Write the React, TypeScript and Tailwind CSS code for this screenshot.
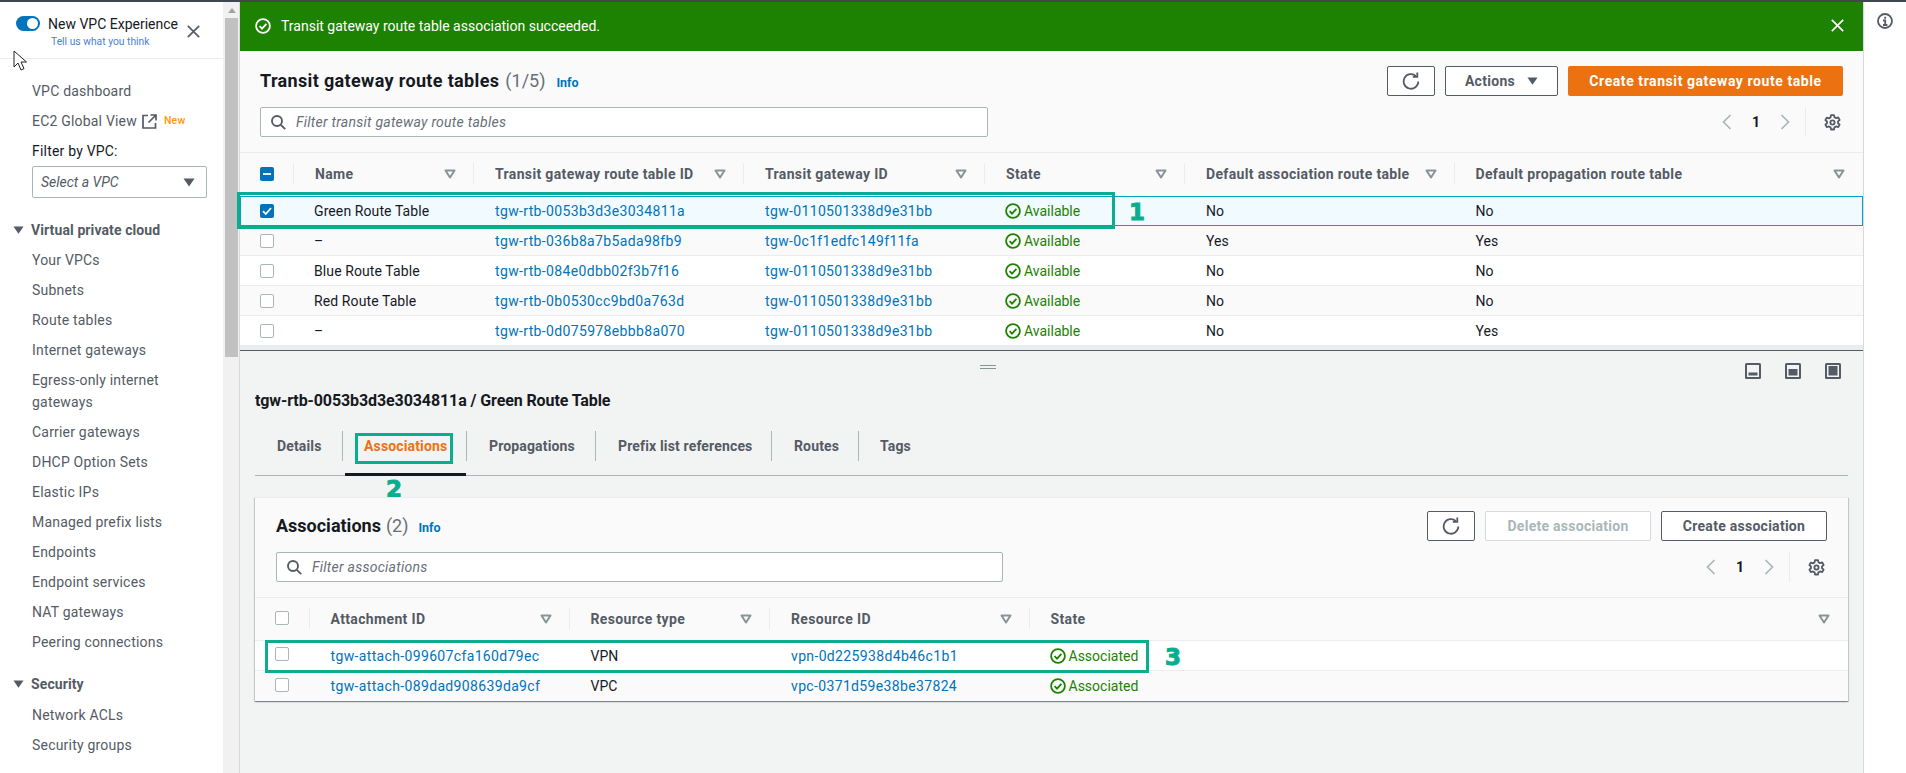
import React from "react";

const Caret = () => (
  <svg width="12" height="10" viewBox="0 0 12 10" className="shrink-0">
    <path d="M1.5 1.5h9L6 8.5z" fill="none" stroke="#879596" strokeWidth="2" strokeLinejoin="round" />
  </svg>
);
const SolidCaret = ({ color = "#545b64", w = 12 }: { color?: string; w?: number }) => (
  <svg width={w} height={w * 0.75} viewBox="0 0 12 9" className="shrink-0">
    <path d="M0.5 0.5h11L6 8.5z" fill={color} />
  </svg>
);
const Refresh = () => (
  <svg width="18" height="18" viewBox="0 0 16 16" fill="none" stroke="#545b64" strokeWidth="1.6">
    <path d="M12.4 3.6A6.5 6.5 0 1 0 14.5 8.5" />
    <path d="M13.6 0.4v4H9.6" />
  </svg>
);
const Search = () => (
  <svg width="15" height="15" viewBox="0 0 15 15" fill="none" stroke="#545b64" strokeWidth="1.9" className="shrink-0">
    <circle cx="6" cy="6" r="5" />
    <path d="M9.8 9.8L14.2 14.2" />
  </svg>
);
const Gear = () => (
  <svg width="17" height="17" viewBox="0 0 16 16" fill="none" stroke="#545b64" strokeWidth="1.7">
    <path d="M6.6 1h2.8l.4 2 1.6.9 2-.7 1.3 2.4-1.5 1.3v1.8l1.5 1.3-1.3 2.4-2-.7-1.6.9-.4 2H6.6l-.4-2-1.6-.9-2 .7-1.3-2.4 1.5-1.3V7.1L1.3 5.8l1.3-2.4 2 .7 1.6-.9z" strokeLinejoin="round" />
    <circle cx="8" cy="8" r="2" />
  </svg>
);
const Chevron = ({ dir }: { dir: "l" | "r" }) => (
  <svg width="10" height="16" viewBox="0 0 10 16" fill="none" stroke="#aab7b8" strokeWidth="1.7">
    <path d={dir === "l" ? "M8.5 1L1.5 8l7 7" : "M1.5 1l7 7-7 7"} />
  </svg>
);
const OkCircle = ({ color = "#1d8102", size = 16 }: { color?: string; size?: number }) => (
  <svg width={size} height={size} viewBox="0 0 16 16" fill="none" stroke={color} strokeWidth="1.8" className="shrink-0">
    <circle cx="8" cy="8" r="6.9" />
    <path d="M4.6 8.2l2.4 2.4 4.4-4.8" />
  </svg>
);
const Close = ({ color, size = 13 }: { color: string; size?: number }) => (
  <svg width={size} height={size} viewBox="0 0 13 13" fill="none" stroke={color} strokeWidth="1.7">
    <path d="M0.8 0.8l11.4 11.4M12.2 0.8L0.8 12.2" />
  </svg>
);
const Box = ({ checked, dash }: { checked?: boolean; dash?: boolean }) =>
  checked || dash ? (
    <span className="flex h-[14px] w-[14px] items-center justify-center rounded-[2px] bg-[#0073bb]">
      <svg width="10" height="10" viewBox="0 0 10 10" fill="none" stroke="#fff" strokeWidth="1.8">
        {dash ? <path d="M1 5h8" /> : <path d="M1 5.2l2.8 2.8L9 2" />}
      </svg>
    </span>
  ) : (
    <span className="block h-[14px] w-[14px] rounded-[2px] border border-[#aab7b8] bg-white" />
  );

const Sep = () => <span className="absolute right-0 top-[10px] h-[21px] w-px bg-[#eaeded]" />;

const Th = ({ label, last }: { label: string; last?: boolean }) => (
  <div className="relative flex h-full items-center justify-between pb-[1px] pl-[21px] pr-[18px] font-bold tracking-[0.35px] text-[#545b64]">
    <span>{label}</span>
    <Caret />
    {!last && <Sep />}
  </div>
);

const Status = ({ label }: { label: string }) => (
  <div className="flex items-center gap-[3px] pl-[20px] text-[#1d8102]">
    <OkCircle />
    <span>{label}</span>
  </div>
);

const Link = ({ children }: { children: string }) => (
  <div className="pl-[21px] tracking-[0.35px] text-[#0073bb]">{children}</div>
);

const topRows = [
  ["Green Route Table", "tgw-rtb-0053b3d3e3034811a", "tgw-0110501338d9e31bb", "No", "No"],
  ["–", "tgw-rtb-036b8a7b5ada98fb9", "tgw-0c1f1edfc149f11fa", "Yes", "Yes"],
  ["Blue Route Table", "tgw-rtb-084e0dbb02f3b7f16", "tgw-0110501338d9e31bb", "No", "No"],
  ["Red Route Table", "tgw-rtb-0b0530cc9bd0a763d", "tgw-0110501338d9e31bb", "No", "No"],
  ["–", "tgw-rtb-0d075978ebbb8a070", "tgw-0110501338d9e31bb", "No", "Yes"],
];

const navA = [
  "Your VPCs",
  "Subnets",
  "Route tables",
  "Internet gateways",
  "Egress-only internet gateways",
  "Carrier gateways",
  "DHCP Option Sets",
  "Elastic IPs",
  "Managed prefix lists",
  "Endpoints",
  "Endpoint services",
  "NAT gateways",
  "Peering connections",
];

const NavItem = ({ children }: { children: React.ReactNode }) => (
  <div className="py-[4px] pl-[32px] pr-[20px] text-[14px] leading-[22px] tracking-[0.2px] text-[#545b64]">{children}</div>
);

const NavHead = ({ children }: { children: string }) => (
  <div className="flex items-center gap-[7px] pl-[13px] text-[14px] font-bold leading-[22px] tracking-[0.1px] text-[#545b64]">
    <SolidCaret w={11} />
    <span>{children}</span>
  </div>
);

const Num = ({ children, className }: { children: string; className: string }) => (
  <span
    className={`absolute font-['DejaVu_Sans',sans-serif] text-[23px] font-bold leading-none text-[#0aae8f] [-webkit-text-stroke:1px_#0aae8f] ${className}`}
  >
    {children}
  </span>
);

const Outline = ({ className }: { className: string }) => (
  <span className={`pointer-events-none absolute border-[3px] border-[#0aae8f] ${className}`} />
);

const PanelIcon = ({ fill }: { fill: "low" | "mid" | "full" }) => (
  <svg width="16" height="16" viewBox="0 0 16 16">
    <rect x="0" y="0" width="16" height="16" rx="1.5" fill="#545b64" />
    <rect x="2" y="2" width="12" height="12" fill="#f2f3f3" />
    {fill === "low" && <rect x="3.5" y="9.5" width="9" height="3" fill="#545b64" />}
    {fill === "mid" && <rect x="3.5" y="6" width="9" height="6.5" fill="#545b64" />}
    {fill === "full" && <rect x="3.5" y="3" width="9" height="9.5" fill="#545b64" />}
  </svg>
);

const Pager = () => (
  <div className="flex items-center">
    <Chevron dir="l" />
    <span className="w-[48px] text-center text-[14px] font-bold text-[#16191f]">1</span>
    <Chevron dir="r" />
    <span className="ml-[15px] mr-[18px] h-[30px] w-px bg-[#eaeded]" />
    <Gear />
  </div>
);

const topCols = "grid grid-cols-[54px_180px_270px_241px_200px_269.5px_1fr]";
const lowCols = "grid grid-cols-[54.5px_260px_200.5px_259.5px_1fr]";

export default function App() {
  return (
    <div className="flex h-[773px] w-[1906px] flex-col overflow-hidden border-t-2 border-[#414750] bg-white font-['Roboto',sans-serif] text-[14px] leading-[20px] text-[#16191f]">
      <div className="flex min-h-0 flex-1">
        {/* Sidebar */}
        <aside className="flex w-[240px] shrink-0 border-r border-[#d5dbdb]">
          <div className="relative w-[223px] shrink-0">
            <div className="flex h-[57px] border-b border-[#eaeded] pl-[16px] pt-[14px]">
              <span className="flex h-[15px] w-[24px] items-center justify-end rounded-full bg-[#0073bb] pr-[2px]">
                <span className="h-[11px] w-[11px] rounded-full bg-white" />
              </span>
              <div className="ml-[8px] w-[133px]">
                <div className="leading-[16px] text-[#16191f]">New VPC Experience</div>
                <div className="ml-[3px] mt-[2px] text-[10.3px] leading-[15px] text-[#4a7fd6]">Tell us what you think</div>
              </div>
              <span className="ml-[6px] mt-[9px]">
                <Close color="#545b64" />
              </span>
            </div>
            <svg width="14" height="21" viewBox="0 0 14 21" className="absolute left-[13px] top-[48px]">
              <path d="M1 1v16l4-4 3 7 3-1.4-3-6.6h5.5z" fill="#fff" stroke="#222" strokeWidth="1" strokeLinejoin="round" />
            </svg>
            <div className="pt-[17px]">
              <NavItem>VPC dashboard</NavItem>
              <NavItem>
                <span className="flex items-center">
                  EC2 Global View
                  <svg width="15" height="15" viewBox="0 0 15 15" fill="none" stroke="#545b64" strokeWidth="1.7" className="ml-[5px]">
                    <path d="M6 1.5H1v12.5h12.5V9M8.5 1h5.5v5.5M14 1L6.5 8.5" />
                  </svg>
                  <span className="ml-[7px] text-[10.5px] font-medium text-[#ff9900]">New</span>
                </span>
              </NavItem>
              <div className="py-[4px] pl-[32px] leading-[22px] tracking-[0.2px] text-[#16191f]">Filter by VPC:</div>
              <div className="ml-[32px] flex h-[32px] w-[175px] items-center justify-between rounded-[2px] border border-[#aab7b8] pl-[8px] pr-[11px] italic text-[#545b64]">
                <span>Select a VPC</span>
                <SolidCaret w={12} />
              </div>
              <div className="mt-[21px]">
                <NavHead>Virtual private cloud</NavHead>
              </div>
              <div className="mt-[4px]">
                {navA.map((n) => (
                  <NavItem key={n}>{n}</NavItem>
                ))}
              </div>
              <div className="mt-[16px]">
                <NavHead>Security</NavHead>
              </div>
              <div className="mt-[5px]">
                <NavItem>Network ACLs</NavItem>
                <NavItem>Security groups</NavItem>
              </div>
            </div>
          </div>
          <div className="flex w-[16px] flex-col items-end bg-[#f1f1f1] pr-[1px]">
            <div className="flex h-[16px] w-full items-center justify-center pl-[2px]">
              <svg width="8" height="5" viewBox="0 0 8 5">
                <path d="M0 5l4-5 4 5z" fill="#a3a3a3" />
              </svg>
            </div>
            <div className="h-[339px] w-[13px] bg-[#c1c1c1]" />
          </div>
        </aside>

        {/* Main */}
        <main className="flex w-[1623px] shrink-0 flex-col">
          <div className="flex h-[49px] shrink-0 items-center bg-[#1d8102] pb-[2px] pl-[15px] pr-[19px] text-white">
            <OkCircle color="#fff" size={16} />
            <span className="ml-[10px] flex-1">Transit gateway route table association succeeded.</span>
            <Close color="#fff" />
          </div>

          <section className="relative h-[295px] shrink-0 bg-[#fafafa]">
            <div className="h-[102px] border-b border-[#eaeded] px-[20px] pt-[15px]">
              <div className="flex h-[30px] items-center">
                <h1 className="text-[18px] font-bold tracking-[0.35px] text-[#16191f]">Transit gateway route tables</h1>
                <span className="ml-[6px] text-[18px] text-[#687078]">(1/5)</span>
                <span className="ml-[11px] mt-[4px] text-[12.5px] font-bold text-[#0073bb]">Info</span>
                <div className="ml-auto flex items-center gap-[10px]">
                  <button className="flex h-[30px] w-[48px] items-center justify-center rounded-[2px] border border-[#545b64] bg-white">
                    <Refresh />
                  </button>
                  <button className="flex h-[30px] w-[113px] items-center justify-center gap-[12px] rounded-[2px] border border-[#545b64] bg-white font-bold tracking-[0.3px] text-[#545b64]">
                    Actions
                    <SolidCaret w={11} />
                  </button>
                  <button className="h-[30px] w-[275px] rounded-[2px] bg-[#ec7211] font-bold tracking-[0.57px] text-white">
                    Create transit gateway route table
                  </button>
                </div>
              </div>
              <div className="mt-[11px] flex h-[30px] items-center">
                <div className="flex h-[30px] w-[728px] items-center rounded-[2px] border border-[#aab7b8] bg-white pl-[10px]">
                  <Search />
                  <span className="ml-[10px] italic tracking-[0.25px] text-[#687078]">Filter transit gateway route tables</span>
                </div>
                <div className="ml-auto pr-[2px]">
                  <Pager />
                </div>
              </div>
            </div>
            <div className={`${topCols} h-[43px] items-center`}>
              <div className="relative flex h-full items-center pb-[1px] pl-[20px]">
                <Box dash />
                <Sep />
              </div>
              <Th label="Name" />
              <Th label="Transit gateway route table ID" />
              <Th label="Transit gateway ID" />
              <Th label="State" />
              <Th label="Default association route table" />
              <Th label="Default propagation route table" last />
            </div>
            {topRows.map((r, i) => (
              <div
                key={r[1]}
                className={`${topCols} h-[30px] items-center ${
                  i === 0
                    ? "bg-[#f1faff] shadow-[inset_0_0_0_1px_#00a1c9]"
                    : i % 2 === 1
                      ? "border-b border-[#eaeded]"
                      : "border-b border-[#eaeded] bg-white"
                }`}
              >
                <div className="pl-[20px]">
                  <Box checked={i === 0} />
                </div>
                <div className="pl-[20px] tracking-[0.1px]">{r[0]}</div>
                <Link>{r[1]}</Link>
                <Link>{r[2]}</Link>
                <Status label="Available" />
                <div className="pl-[21px]">{r[3]}</div>
                <div className="pl-[21px]">{r[4]}</div>
              </div>
            ))}
            <Outline className="left-[-3px] top-[141px] h-[37px] w-[878px]" />
            <Num className="left-[889px] top-[150px]">1</Num>
          </section>

          <div className="h-[4px] shrink-0 bg-[#eaeded]" />

          <section className="relative flex-1 border-t border-[#545b64] bg-[#f2f3f3] px-[15px]">
            <div className="flex h-[40px] items-start">
              <div className="ml-[725px] mt-[14px] flex w-[16px] flex-col gap-[2px]">
                <span className="h-px bg-[#879596]" />
                <span className="h-px bg-[#879596]" />
              </div>
              <div className="ml-auto mr-[7px] mt-[12px] flex gap-[24px]">
                <PanelIcon fill="low" />
                <PanelIcon fill="mid" />
                <PanelIcon fill="full" />
              </div>
            </div>
            <div className="h-[20px] text-[16px] font-bold tracking-[-0.1px]">tgw-rtb-0053b3d3e3034811a / Green Route Table</div>

            <div className="relative mt-[20px] flex h-[45px] items-start border-b border-[#aab7b8] font-bold tracking-[0.15px] text-[#545b64]">
              {[
                ["Details", "w-[88px] pl-[22px]"],
                ["Associations", "w-[124px] pl-[21px] text-[#ec7211]"],
                ["Propagations", "w-[129px] pl-[22px]"],
                ["Prefix list references", "w-[176px] pl-[22px]"],
                ["Routes", "w-[87px] pl-[22px]"],
                ["Tags", "w-[70px] pl-[21px]"],
              ].map(([t, c], i) => (
                <div key={t} className={`flex h-[30px] items-center ${i < 5 ? "border-r border-[#aab7b8]" : ""} ${c}`}>
                  {t}
                </div>
              ))}
              <span className="absolute bottom-[-1px] left-[90px] h-[3px] w-[121px] bg-[#16191f]" />
              <Outline className="left-[100px] top-[2px] h-[31px] w-[98px]" />
              <Num className="left-[131px] top-[47px]">2</Num>
            </div>

            <div className="relative mt-[21px] h-[204px] border-t border-[#eaeded] bg-[#fafafa] shadow-[0_1px_1px_0_rgba(0,28,36,0.3),1px_1px_1px_0_rgba(0,28,36,0.15),-1px_1px_1px_0_rgba(0,28,36,0.15)]">
              <div className="h-[100px] border-b border-[#eaeded] px-[21px] pt-[13px]">
                <div className="flex h-[30px] items-center">
                  <h2 className="text-[18px] font-bold">Associations</h2>
                  <span className="ml-[5px] text-[18px] text-[#687078]">(2)</span>
                  <span className="ml-[10px] mt-[4px] text-[12.5px] font-bold text-[#0073bb]">Info</span>
                  <div className="ml-auto flex items-center gap-[10px]">
                    <button className="flex h-[30px] w-[48px] items-center justify-center rounded-[2px] border border-[#545b64] bg-white">
                      <Refresh />
                    </button>
                    <button className="h-[30px] w-[166px] rounded-[2px] border border-[#d5dbdb] bg-white font-bold tracking-[0.27px] text-[#aab7b8]">
                      Delete association
                    </button>
                    <button className="h-[30px] w-[166px] rounded-[2px] border border-[#545b64] bg-white font-bold tracking-[0.27px] text-[#545b64]">
                      Create association
                    </button>
                  </div>
                </div>
                <div className="mt-[11px] flex h-[30px] items-center">
                  <div className="flex h-[30px] w-[727px] items-center rounded-[2px] border border-[#aab7b8] bg-white pl-[10px]">
                    <Search />
                    <span className="ml-[10px] italic tracking-[0.25px] text-[#687078]">Filter associations</span>
                  </div>
                  <div className="ml-auto pr-[2px]">
                    <Pager />
                  </div>
                </div>
              </div>
              <div className={`${lowCols} h-[42px] items-center`}>
                <div className="relative flex h-full items-center pb-[3px] pl-[20px]">
                  <Box />
                  <Sep />
                </div>
                <Th label="Attachment ID" />
                <Th label="Resource type" />
                <Th label="Resource ID" />
                <Th label="State" last />
              </div>
              <div className="border-t border-[#eaeded]" />
              {[
                ["tgw-attach-099607cfa160d79ec", "VPN", "vpn-0d225938d4b46c1b1"],
                ["tgw-attach-089dad908639da9cf", "VPC", "vpc-0371d59e38be37824"],
              ].map((r, i) => (
                <div
                  key={r[0]}
                  className={`${lowCols} h-[30px] items-center ${i === 0 ? "border-b border-[#eaeded] bg-white" : ""}`}
                >
                  <div className="pb-[3px] pl-[20px]">
                    <Box />
                  </div>
                  <Link>{r[0]}</Link>
                  <div className="pl-[21px]">{r[1]}</div>
                  <Link>{r[2]}</Link>
                  <Status label="Associated" />
                </div>
              ))}
              <Outline className="left-[10px] top-[142px] h-[33px] w-[884px]" />
              <Num className="left-[910px] top-[148px]">3</Num>
            </div>
          </section>
        </main>

        {/* Right rail */}
        <aside className="flex flex-1 justify-center border-l border-[#d5dbdb] pt-[11px]">
          <svg width="16" height="16" viewBox="0 0 16 16" fill="none" stroke="#545b64" strokeWidth="1.8">
            <circle cx="8" cy="8" r="7" />
            <path d="M6 7.5h2.2V12M6 12h4.4M8.2 3.8v2" />
          </svg>
        </aside>
      </div>
    </div>
  );
}
